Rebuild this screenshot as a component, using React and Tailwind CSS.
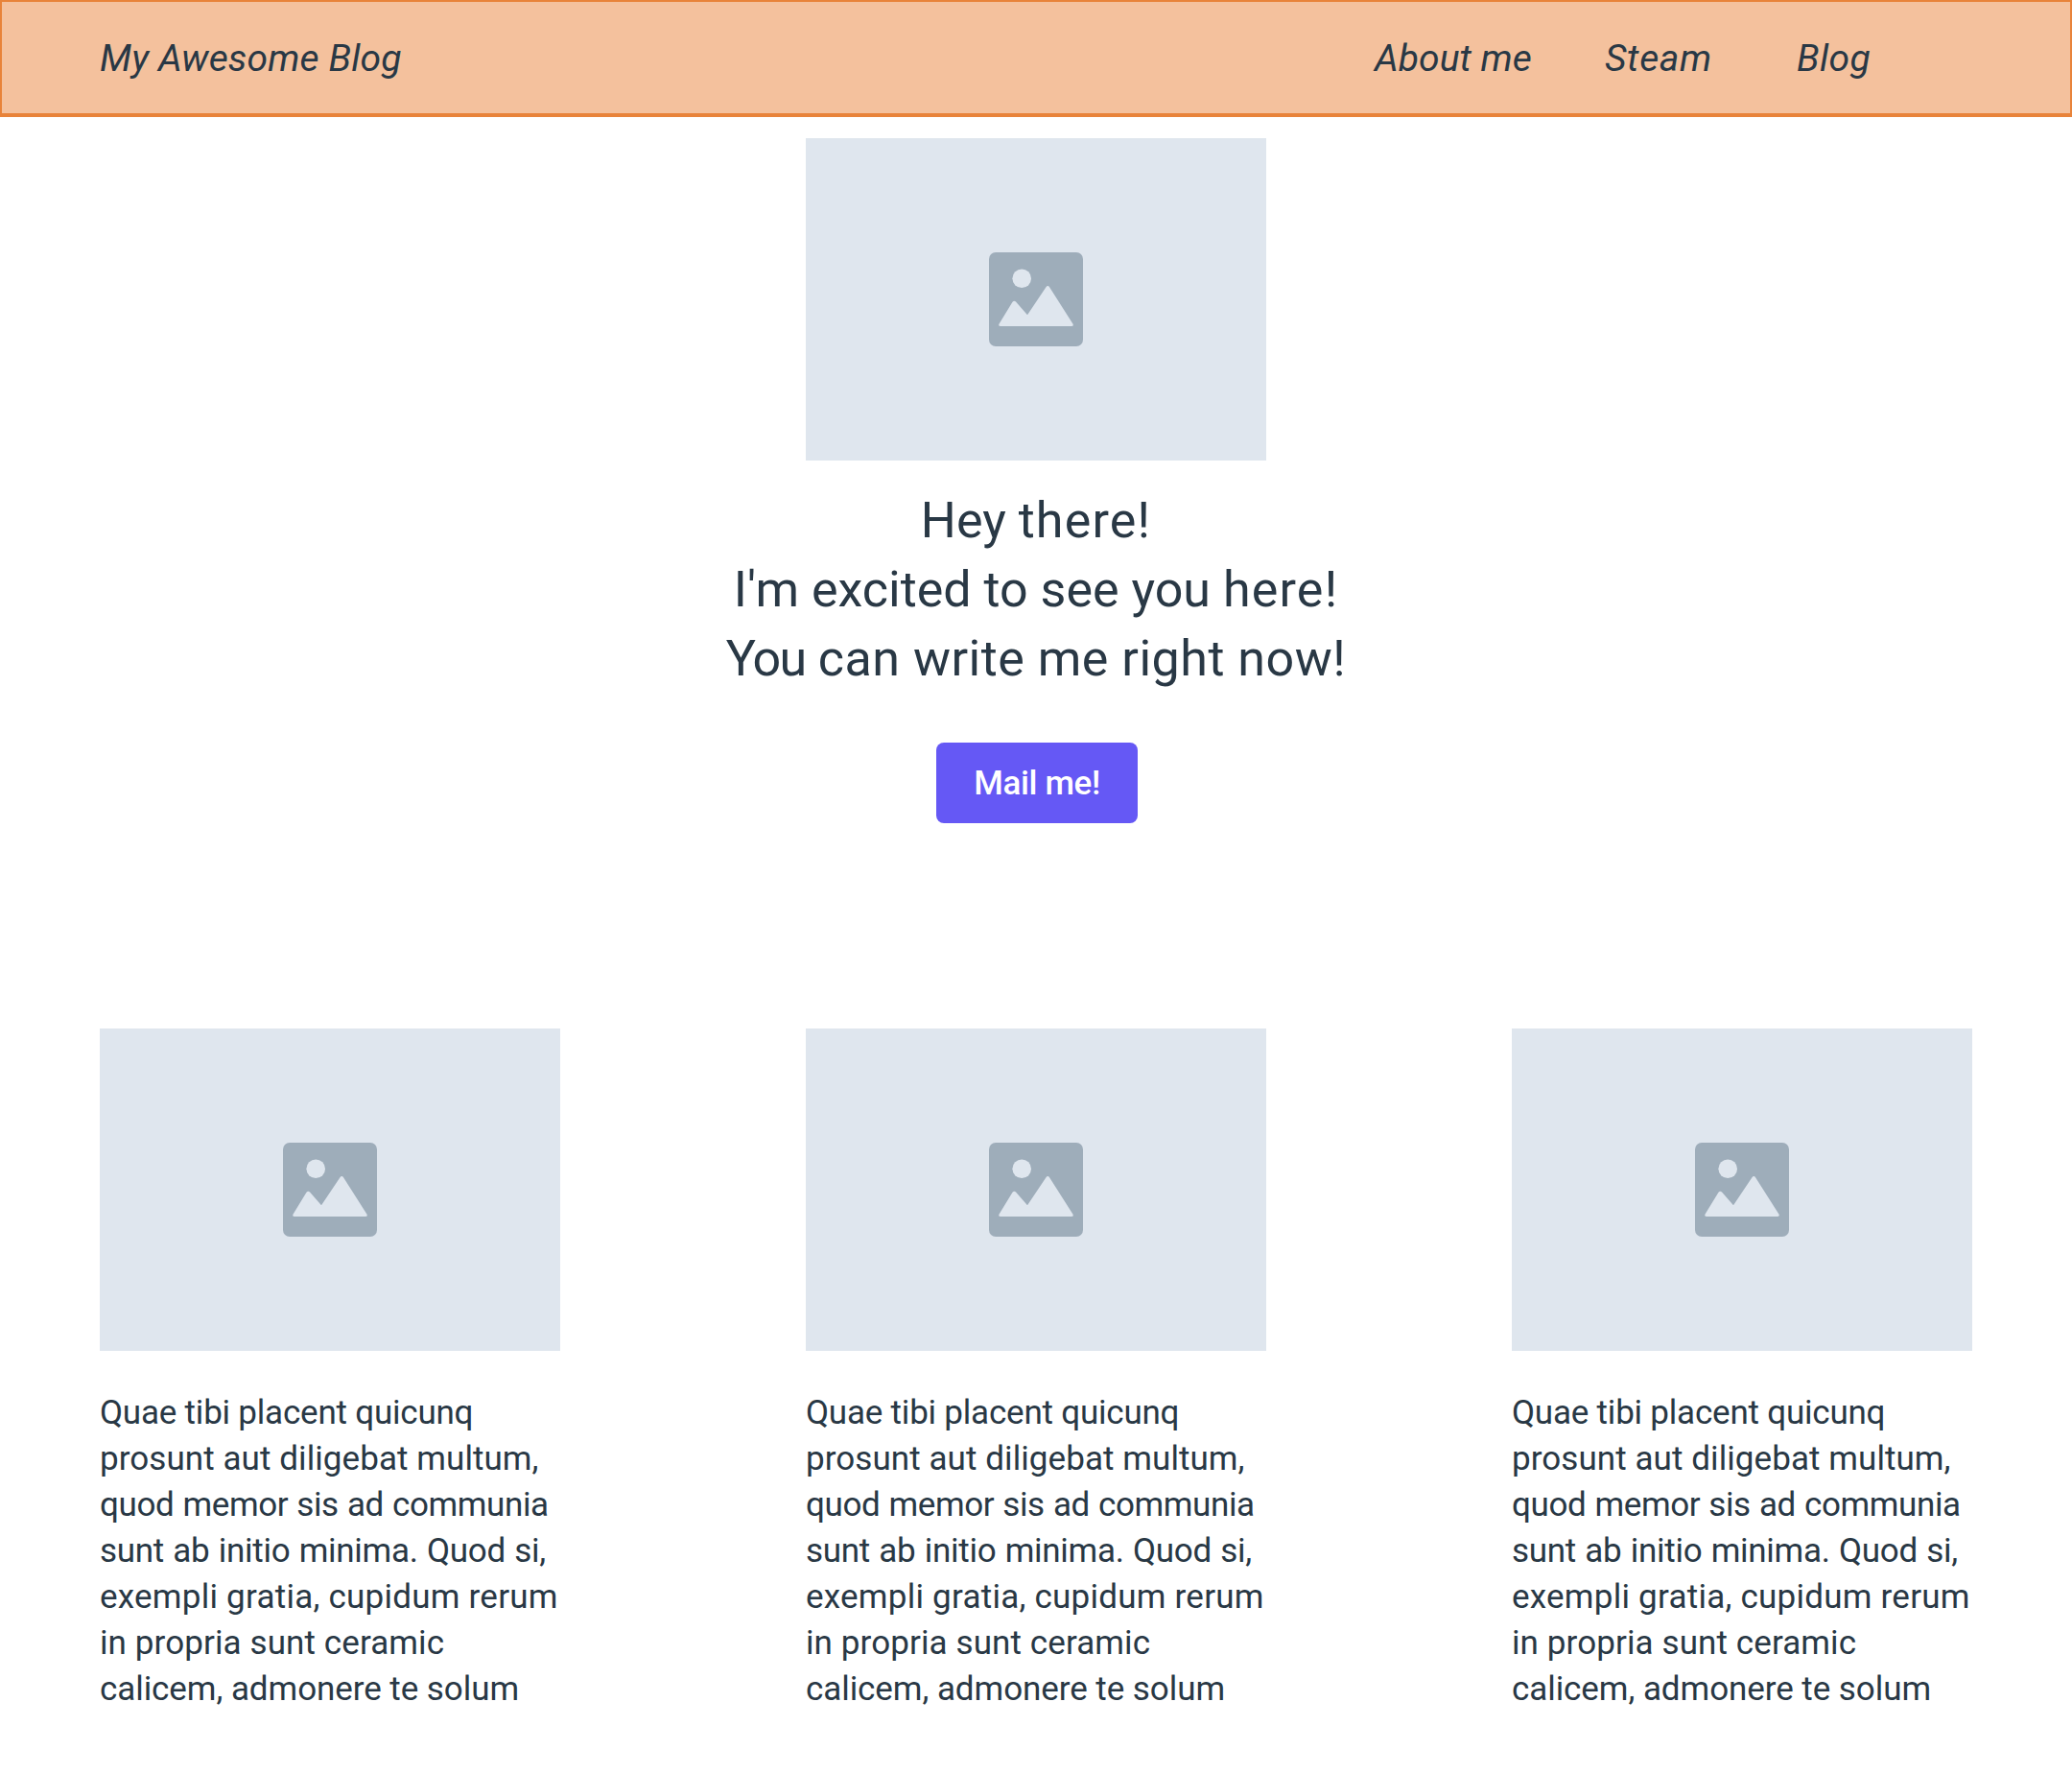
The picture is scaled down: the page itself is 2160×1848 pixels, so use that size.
const navItems = [
  { label: "About me", className: "w-[240px] tracking-[0.04px]" },
  { label: "Steam", className: "w-[200px] tracking-[0.65px]" },
  { label: "Blog", className: "w-[285px] tracking-[0.35px]" },
];

const excerpt = [
  { text: "Quae tibi placent quicunq", className: "tracking-[-0.21px]" },
  { text: "prosunt aut diligebat multum,", className: "tracking-[0.07px]" },
  { text: "quod memor sis ad communia", className: "tracking-[-0.39px] [word-spacing:0.8px]" },
  { text: "sunt ab initio minima. Quod si,", className: "tracking-[-0.28px] [word-spacing:0.9px]" },
  { text: "exempli gratia, cupidum rerum", className: "tracking-[0.24px]" },
  { text: "in propria sunt ceramic", className: "tracking-[0.1px]" },
  { text: "calicem, admonere te solum", className: "tracking-[-0.07px]" },
];

function ImagePlaceholder() {
  return (
    <div className="flex h-[336px] w-[480px] items-center justify-center bg-[#DFE6EE]">
      <svg width="98" height="98" viewBox="0 0 98 98" aria-hidden="true">
        <rect width="98" height="98" rx="7" fill="#9EADBA" />
        <circle cx="34.2" cy="27.2" r="9.8" fill="#DFE6EE" />
        <path
          d="M10.6 74.4 L24.5 51.8 Q26.2 50 28 51.6 L40 65.3 L59.3 36.4 Q61.3 33.6 63.2 36.4 L87.4 74.4 Q88.6 76.7 86.2 77 L11.8 77 Q9.4 76.7 10.6 74.4 Z"
          fill="#DFE6EE"
        />
      </svg>
    </div>
  );
}

function Header() {
  return (
    <header className="flex h-[122px] items-center justify-between border-2 border-b-4 border-[#E8833A] bg-[#F4C19D] pt-0.5 pl-[102px] text-[39px] leading-[46px] italic">
      <h1 className="tracking-[0.14px]">My Awesome Blog</h1>
      <nav className="flex">
        {navItems.map((item) => (
          <a key={item.label} className={item.className}>
            {item.label}
          </a>
        ))}
      </nav>
    </header>
  );
}

function Greeting() {
  return (
    <div className="mt-[27px] text-center text-[52px] leading-[72px]">
      <p>
        Hey <span className="tracking-[1.2px]">there!</span>
      </p>
      <p>
        I'm excited to see you <span className="tracking-[1.2px]">here!</span>
      </p>
      <p className="tracking-[0.5px]">
        <span className="tracking-[-1.8px]">You</span> can write me right now!
      </p>
    </div>
  );
}

function PostCard() {
  return (
    <article className="w-[480px]">
      <ImagePlaceholder />
      <div className="mt-[41px] text-[35px] leading-[48px] whitespace-nowrap">
        {excerpt.map((line) => (
          <p key={line.text} className={line.className}>
            {line.text}
          </p>
        ))}
      </div>
    </article>
  );
}

export default function App() {
  return (
    <div className="h-[1848px] w-[2160px] overflow-hidden bg-white font-['Roboto',sans-serif] text-[#293845]">
      <Header />
      <main>
        <section className="flex flex-col items-center pt-[22px]">
          <ImagePlaceholder />
          <Greeting />
          <button className="mt-[51px] ml-0.5 h-[84px] w-[210px] rounded-lg bg-[#6558F5] text-[35px] leading-[41px] font-medium tracking-[-0.35px] text-white">
            Mail me!
          </button>
        </section>
        <section className="mt-[214px] flex justify-between px-[104px]">
          <PostCard />
          <PostCard />
          <PostCard />
        </section>
      </main>
    </div>
  );
}
